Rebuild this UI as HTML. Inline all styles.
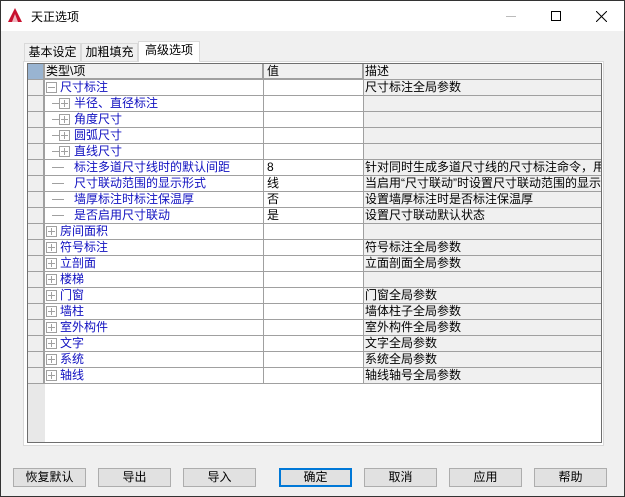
<!DOCTYPE html><html><head><meta charset="utf-8"><style>
*{margin:0;padding:0;box-sizing:border-box}
body{width:625px;height:497px;background:#f0f0f0;font-family:"Liberation Sans","Noto Sans CJK SC",sans-serif;font-size:12px;position:relative;overflow:hidden;border:1px solid #333}
.a{position:absolute}
.title{left:0;top:0;width:623px;height:30px;background:#fff}
.tab{top:42px;height:18px;border:1px solid #d9d9d9;border-bottom:none;background:#f0f0f0;text-align:center;line-height:16px;font-size:12px}
.grid{left:26px;top:62px;width:575px;height:380px;border:1px solid #6e6e6e;background:#fff;overflow:hidden}
.row{position:absolute;left:0;width:573px;height:16px;border-bottom:1px solid #a0a0a0;line-height:15px;white-space:nowrap}
.ind{position:absolute;left:0;top:0;width:17px;height:15px;background:#efefef;border-right:2px solid #a0a0a0}
.c1{position:absolute;left:17px;top:0;width:219px;height:15px;border-right:1px solid #a0a0a0;color:#1010c0;overflow:hidden}
.c2{position:absolute;left:236px;top:0;width:100px;height:15px;border-right:1px solid #a0a0a0;padding-left:3px}
.c3{position:absolute;left:336px;top:0;width:237px;height:15px;background:#f0f0f0;padding-left:1px;overflow:hidden}
.box{position:absolute;width:11px;height:11px;border:1px solid #a0a0a0;top:2px}
.box:before{content:"";position:absolute;left:1px;top:4px;width:7px;height:1px;background:#a0a0a0}
.p:after{content:"";position:absolute;left:4px;top:1px;width:1px;height:7px;background:#a0a0a0}
.hl{position:absolute;height:1px;background:#a0a0a0;top:7px}
.btn{top:467px;height:19px;width:73px;border:1px solid #adadad;background:#e1e1e1;text-align:center;line-height:17px;font-size:12px}
</style></head><body>
<div class="a title">
<svg class="a" style="left:7px;top:7px" width="14" height="14"><polygon points="7,0 14,14 0,14" fill="#c8102e"/><polygon points="7,6 10,14 4,14" fill="#fff" opacity=".7"/></svg>
<div class="a" style="left:30px;top:7px;font-size:12px">天正选项</div>
<div class="a" style="left:505px;top:15px;width:10px;height:1px;background:#bbb"></div>
<div class="a" style="left:550px;top:10px;width:10px;height:10px;border:1px solid #000"></div>
<svg class="a" style="left:595px;top:10px" width="11" height="11"><path d="M0 0L11 11M11 0L0 11" stroke="#000" stroke-width="1"/></svg>
</div>
<div class="a" style="left:22px;top:60px;width:581px;height:385px;border:1px solid #d9d9d9;background:#fff"></div>
<div class="a tab" style="left:23px;width:57px">基本设定</div>
<div class="a tab" style="left:80px;width:57px">加粗填充</div>
<div class="a tab" style="left:137px;width:62px;top:40px;height:21px;background:#fff">高级选项</div>
<div class="a grid">
<div class="a" style="left:0;top:0;width:17px;height:380px;background:#e8e8e8"></div>
<div class="row" style="top:0;background:#f0f0f0;border-bottom:2px solid #a0a0a0"><div class="ind" style="background:#99b4d1"></div><div class="c1" style="color:#000;border-right:2px solid #a0a0a0;padding-left:1px">类型\项</div><div class="c2" style="border-right:2px solid #a0a0a0">值</div><div class="c3">描述</div></div>
</div>
<script>
var R=[[0,'尺寸标注','','尺寸标注全局参数','m'],[1,'半径、直径标注','','','p'],[1,'角度尺寸','','','p'],[1,'圆弧尺寸','','','p'],[1,'直线尺寸','','','p'],[1,'标注多道尺寸线时的默认间距','8','针对同时生成多道尺寸线的尺寸标注命令，用',''],[1,'尺寸联动范围的显示形式','线','当启用“尺寸联动”时设置尺寸联动范围的显示',''],[1,'墙厚标注时标注保温厚','否','设置墙厚标注时是否标注保温厚',''],[1,'是否启用尺寸联动','是','设置尺寸联动默认状态',''],[0,'房间面积','','','p'],[0,'符号标注','','符号标注全局参数','p'],[0,'立剖面','','立面剖面全局参数','p'],[0,'楼梯','','','p'],[0,'门窗','','门窗全局参数','p'],[0,'墙柱','','墙体柱子全局参数','p'],[0,'室外构件','','室外构件全局参数','p'],[0,'文字','','文字全局参数','p'],[0,'系统','','系统全局参数','p'],[0,'轴线','','轴线轴号全局参数','p']];
var g=document.querySelector('.grid'),h='';
R.forEach(function(r,i){var c='';
if(r[0]==0){c+='<div class="box '+(r[4]=='p'?'p':'')+'" style="left:1px"></div><span style="position:absolute;left:15px">'+r[1]+'</span>';}
else{c+='<div class="hl" style="left:7px;width:'+(r[4]?7:12)+'px"></div>'+(r[4]?'<div class="box p" style="left:14px"></div>':'')+'<span style="position:absolute;left:29px">'+r[1]+'</span>';}
h+='<div class="row" style="top:'+(16+i*16)+'px"><div class="ind"></div><div class="c1">'+c+'</div><div class="c2">'+r[2]+'</div><div class="c3">'+r[3]+'</div></div>';});
g.insertAdjacentHTML('beforeend',h);
</script>
<div class="a btn" style="left:12px">恢复默认</div>
<div class="a btn" style="left:97px">导出</div>
<div class="a btn" style="left:182px">导入</div>
<div class="a btn" style="left:278px;border:2px solid #0078d7;line-height:15px">确定</div>
<div class="a btn" style="left:363px">取消</div>
<div class="a btn" style="left:448px">应用</div>
<div class="a btn" style="left:533px">帮助</div>
</body></html>
